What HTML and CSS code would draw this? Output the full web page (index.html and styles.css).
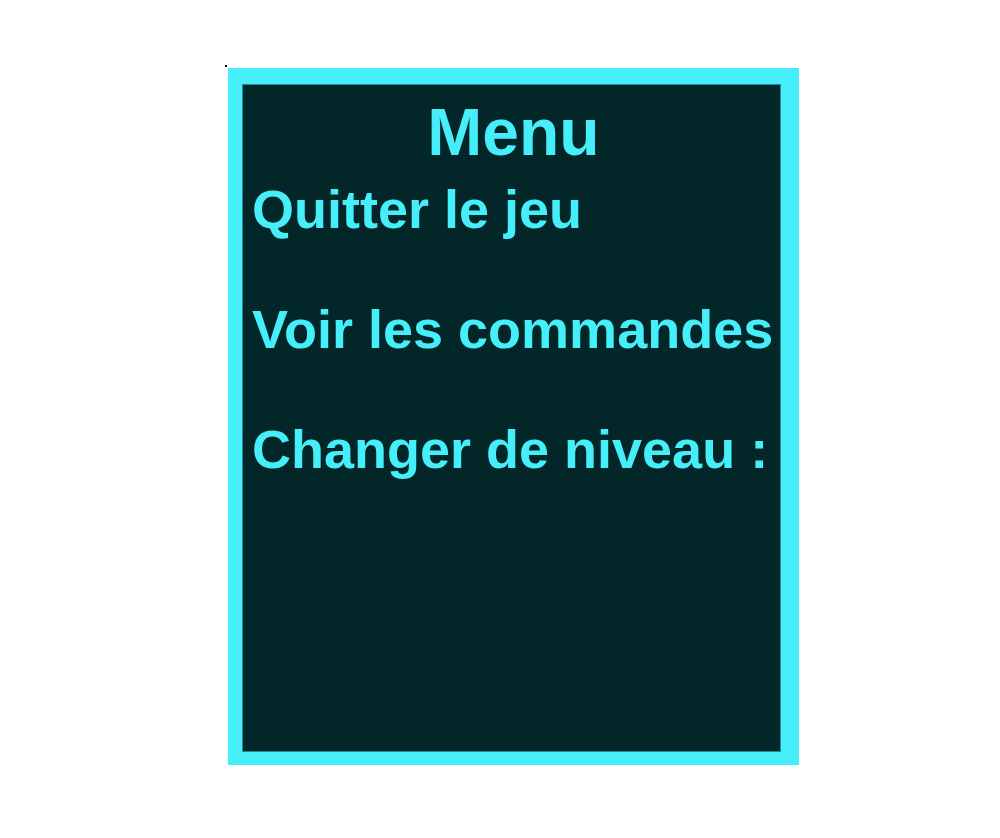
FILE: index.html
```html
<!DOCTYPE html>
<html lang="fr">
<head>
<meta charset="utf-8">
<title>Menu</title>
<link rel="stylesheet" href="styles.css">
</head>
<body>
<div class="dot"></div>
<div class="menu">
  <h1 class="title">Menu</h1>
  <ul class="items">
    <li class="item">Quitter le jeu</li>
    <li class="item">Voir les commandes</li>
    <li class="item">Changer de niveau :</li>
  </ul>
</div>
</body>
</html>
```
FILE: styles.css
```css
html, body {
  margin: 0;
  padding: 0;
  background: #ffffff;
}
body {
  font-family: "Liberation Sans", Arial, sans-serif;
  padding-top: 65px;
}
.dot {
  width: 2px;
  height: 2px;
  background: #111;
  margin-left: 225px;
  margin-bottom: 1px;
}
.menu {
  box-sizing: border-box;
  width: 571px;
  height: 697px;
  margin-left: 228px;
  background: #032628;
  border-style: solid;
  border-color: #45eef8;
  border-width: 16px 18px 13px 14px;
  box-shadow: inset 0 0 0 1px #1f8f98;
  padding: 13px 6px 0 10px;
  color: #45eef8;
}
.title {
  margin: 0;
  font-size: 66px;
  line-height: 71px;
  font-weight: 700;
  text-align: center;
}
.items {
  list-style: none;
  margin: 11px 0 0 0;
  padding: 0;
  display: flex;
  flex-direction: column;
  gap: 60px;
}
.item {
  font-size: 54px;
  line-height: 60px;
  font-weight: 700;
  white-space: nowrap;
}
```
